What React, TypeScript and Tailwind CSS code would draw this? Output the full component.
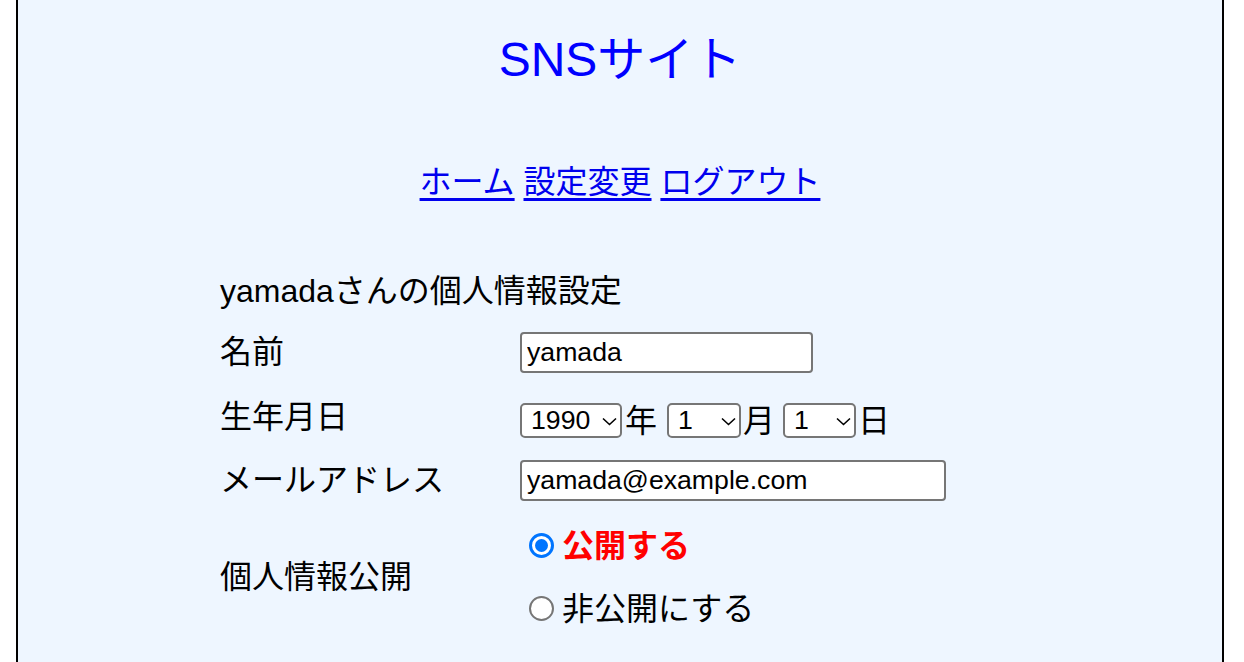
import React from "react";

const font = { fontFamily: '"Liberation Sans", "Noto Sans CJK JP", sans-serif' };

function Sel({ value, options, w }: { value: string; options: string[]; w: string }) {
  return (
    <div className={`relative ${w} h-[35px] shrink-0`}>
      <select
        defaultValue={value}
        className="block appearance-none w-full h-[35px] bg-white border-2 border-[#767676] rounded-[5px] pl-[9px] pr-0 py-0 text-[26.67px] leading-[31px] text-black outline-none"
        style={font}
      >
        {options.map((o) => (
          <option key={o} value={o}>
            {o}
          </option>
        ))}
      </select>
      <svg
        width="15"
        height="9"
        viewBox="0 0 15 9"
        className="pointer-events-none absolute right-[5px] top-[14px] block"
      >
        <path d="M1 1.5 L7.5 7.5 L14 1.5" fill="none" stroke="#000" strokeWidth="1.6" />
      </svg>
    </div>
  );
}

function Radio({ checked }: { checked?: boolean }) {
  return checked ? (
    <span className="flex h-[25px] w-[25px] shrink-0 items-center justify-center rounded-full border-[3px] border-[#0075ff] bg-white">
      <span className="h-[13px] w-[13px] rounded-full bg-[#0075ff]" />
    </span>
  ) : (
    <span className="h-[25px] w-[25px] shrink-0 rounded-full border-2 border-[#767676] bg-white" />
  );
}

export default function App() {
  const years = ["1990", "1991", "1992"];
  const nums = Array.from({ length: 12 }, (_, i) => String(i + 1));
  return (
    <div className="w-[1244px] h-[662px] overflow-hidden bg-white" style={font}>
      <div className="ml-[16px] w-[1208px] h-[662px] border-x-2 border-black bg-[#eef6ff] text-black">
        <div className="pt-[32px] text-center text-[48px] leading-[55px] text-[#0000ff]">SNSサイト</div>
        <div className="mt-[77px] text-center text-[32px] leading-[37px]">
          <a href="#" className="text-[#0000ee] underline underline-offset-[5px]">ホーム</a>{" "}
          <a href="#" className="text-[#0000ee] underline underline-offset-[5px]">設定変更</a>{" "}
          <a href="#" className="text-[#0000ee] underline underline-offset-[5px]">ログアウト</a>
        </div>
        <div className="ml-[202px] mt-[71px] text-[32px] leading-[38px]">
          <div className="h-[38px]">yamadaさんの個人情報設定</div>
          <div className="mt-[21px] flex h-[42px] items-center">
            <div className="w-[300px]">名前</div>
            <input
              defaultValue="yamada"
              className="w-[293px] h-[41px] bg-white border-2 border-[#767676] rounded-[4px] px-[5px] text-[26.67px] outline-none"
              style={font}
            />
          </div>
          <div className="mt-[23px] flex h-[42px] items-center">
            <div className="w-[300px]">生年月日</div>
            <div className="flex h-[42px] items-center pt-[7px]">
              <Sel value="1990" options={years} w="w-[102px]" />
              <span className="ml-[3px] leading-[32px]">年</span>
              <div className="ml-[10px]">
                <Sel value="1" options={nums} w="w-[74px]" />
              </div>
              <span className="ml-[2px] leading-[32px]">月</span>
              <div className="ml-[8px]">
                <Sel value="1" options={nums.concat(["13"])} w="w-[73px]" />
              </div>
              <span className="ml-[2px] leading-[32px]">日</span>
            </div>
          </div>
          <div className="mt-[21px] flex h-[42px] items-center">
            <div className="w-[300px]">メールアドレス</div>
            <input
              defaultValue="yamada@example.com"
              className="w-[426px] h-[41px] bg-white border-2 border-[#767676] rounded-[4px] px-[5px] text-[26.67px] outline-none"
              style={font}
            />
          </div>
          <div className="mt-[27px] flex h-[98px] items-center">
            <div className="w-[300px]">個人情報公開</div>
            <div className="flex flex-col gap-[25px] pl-[9px]">
              <label className="flex items-center h-[38px]">
                <Radio checked />
                <span className="ml-[8px] font-bold text-[#ff0000]">公開する</span>
              </label>
              <label className="flex items-center h-[38px]">
                <Radio />
                <span className="ml-[8px]">非公開にする</span>
              </label>
            </div>
          </div>
        </div>
      </div>
    </div>
  );
}
